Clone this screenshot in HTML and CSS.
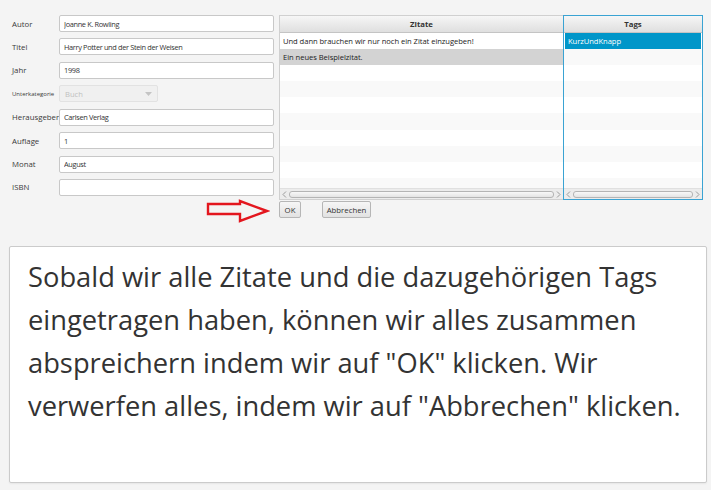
FILE: index.html
```html
<!DOCTYPE html>
<html lang="de">
<head>
<meta charset="utf-8">
<title>Zitate erfassen</title>
<link rel="stylesheet" href="styles.css">
</head>
<body>
<div class="window">
  <div class="top">
    <form class="form">
      <label class="lbl">Autor</label><input class="field" type="text" value="Joanne K. Rowling">
      <label class="lbl">Titel</label><input class="field" type="text" value="Harry Potter und der Stein der Weisen">
      <label class="lbl">Jahr</label><input class="field" type="text" value="1998">
      <label class="lbl small">Unterkategorie</label>
      <div class="select"><span>Buch</span><svg class="caret" width="7" height="4" viewBox="0 0 7 4"><path d="M0 0h7L3.5 4z" fill="#c4c4c4"/></svg></div>
      <label class="lbl">Herausgeber</label><input class="field" type="text" value="Carlsen Verlag">
      <label class="lbl">Auflage</label><input class="field" type="text" value="1">
      <label class="lbl">Monat</label><input class="field" type="text" value="August">
      <label class="lbl">ISBN</label><input class="field" type="text" value="">
    </form>
    <div class="right">
      <div class="tables">
        <div class="table quotes">
          <div class="th">Zitate</div>
          <div class="rows">
            <div class="row">Und dann brauchen wir nur noch ein Zitat einzugeben!</div>
            <div class="row grey">Ein neues Beispielzitat.</div>
            <div class="row"></div><div class="row"></div><div class="row"></div><div class="row"></div>
            <div class="row"></div><div class="row"></div><div class="row"></div><div class="row"></div>
          </div>
          <div class="hscroll">
            <svg class="arr" width="5" height="7" viewBox="0 0 5 7"><path d="M4 0.5L1 3.5L4 6.5" fill="none" stroke="#9a9a9a" stroke-width="1"/></svg>
            <div class="thumb"></div>
            <svg class="arr" width="5" height="7" viewBox="0 0 5 7"><path d="M1 0.5L4 3.5L1 6.5" fill="none" stroke="#9a9a9a" stroke-width="1"/></svg>
          </div>
        </div>
        <div class="table tags">
          <div class="th">Tags</div>
          <div class="rows">
            <div class="row blue">KurzUndKnapp</div>
            <div class="row"></div><div class="row"></div><div class="row"></div><div class="row"></div>
            <div class="row"></div><div class="row"></div><div class="row"></div><div class="row"></div><div class="row"></div>
          </div>
          <div class="hscroll">
            <svg class="arr" width="5" height="7" viewBox="0 0 5 7"><path d="M4 0.5L1 3.5L4 6.5" fill="none" stroke="#9a9a9a" stroke-width="1"/></svg>
            <div class="thumb"></div>
            <svg class="arr" width="5" height="7" viewBox="0 0 5 7"><path d="M1 0.5L4 3.5L1 6.5" fill="none" stroke="#9a9a9a" stroke-width="1"/></svg>
          </div>
        </div>
      </div>
      <div class="buttons">
        <button class="btn ok" type="button">OK</button>
        <button class="btn cancel" type="button">Abbrechen</button>
      </div>
    </div>
    <svg class="arrow" width="64" height="25" viewBox="0 0 64 25"><path d="M2 5H34V2L61 12L34 22V15H2Z" fill="none" stroke="#e3161e" stroke-width="2.4" stroke-linejoin="miter"/></svg>
  </div>
  <div class="card">
    <p class="note">Sobald wir alle Zitate und die dazugehörigen Tags eingetragen haben, können wir alles zusammen abspreichern indem wir auf "OK" klicken. Wir verwerfen alles, indem wir auf "Abbrechen" klicken.</p>
  </div>
</div>
</body>
</html>
```

FILE: styles.css
```css
* { box-sizing: border-box; }

html, body {
  margin: 0;
  padding: 0;
}

body {
  width: 711px;
  height: 490px;
  overflow: hidden;
  background: #f4f4f4;
  font-family: "Open Sans", "Liberation Sans", sans-serif;
  color: #333;
}

.window {
  display: flex;
  flex-direction: column;
}

.top {
  position: relative;
  display: flex;
  padding: 15px 8px 0 12px;
}

.form {
  display: grid;
  grid-template-columns: 47px 215px;
  grid-auto-rows: 17px;
  row-gap: 6.43px;
  align-content: start;
  margin: 0;
}

.lbl {
  font-size: 7.8px;
  color: #3a3a3a;
  align-self: center;
  white-space: nowrap;
}

.lbl.small {
  font-size: 6px;
}

.field {
  height: 17px;
  width: 215px;
  margin: 0;
  padding: 0 4px;
  border: 1px solid #c8c8c8;
  border-radius: 2px;
  background: #fff;
  font-family: inherit;
  font-size: 7.4px;
  letter-spacing: -0.35px;
  color: #333;
  outline: none;
}

.select {
  width: 99px;
  height: 17px;
  display: flex;
  align-items: center;
  justify-content: space-between;
  padding: 0 5px 0 5px;
  border: 1px solid #e2e2e2;
  border-radius: 2px;
  background: #f0f0f0;
  font-size: 7.6px;
  color: #c0c0c0;
}

.right {
  margin-left: 5px;
  width: 424px;
  display: flex;
  flex-direction: column;
}

.tables {
  display: flex;
  height: 185px;
}

.table {
  display: flex;
  flex-direction: column;
  background: #fff;
  border: 1px solid #d0d0d0;
}

.quotes {
  width: 284px;
  border-right: none;
}

.tags {
  width: 140px;
  border: 1px solid #3aa3d3;
}

.th {
  height: 17px;
  flex: none;
  display: flex;
  align-items: center;
  justify-content: center;
  background: linear-gradient(#f6f6f6, #dfdfdf);
  border-bottom: 1px solid #c4c4c4;
  font-size: 7.8px;
  font-weight: 700;
  color: #333;
}

.rows {
  flex: 1;
  overflow: hidden;
}

.row {
  height: 16.1px;
  line-height: 16px;
  padding-left: 3px;
  font-size: 7.6px;
  letter-spacing: -0.05px;
  color: #222;
  white-space: nowrap;
  background: #fff;
}

.row:nth-child(even) {
  background: #f9f9f9;
}

.row.grey {
  background: #d3d3d3;
}

.row.blue {
  background: #0096c9;
  color: #fff;
  margin: 0 1px;
}

.hscroll {
  height: 11px;
  flex: none;
  display: flex;
  align-items: center;
  gap: 2px;
  padding: 0 2px;
  background: #ececec;
  border-top: 1px solid #e0e0e0;
}

.arr {
  flex: none;
}

.thumb {
  flex: 1;
  height: 7px;
  border: 1px solid #b4b4b4;
  border-radius: 3px;
  background: linear-gradient(#f8f8f8, #e4e4e4);
}

.buttons {
  display: flex;
  gap: 21px;
  margin-top: 1px;
}

.btn {
  height: 17px;
  padding: 0;
  margin: 0;
  border: 1px solid #b6b6b6;
  border-radius: 2px;
  background: linear-gradient(#f6f6f6, #e2e2e2);
  font-family: inherit;
  font-size: 7.8px;
  color: #333;
}

.btn.ok {
  width: 22px;
}

.btn.cancel {
  width: 49px;
}

.arrow {
  position: absolute;
  left: 206px;
  top: 199px;
}

.card {
  margin: 28px 4px 0 9px;
  height: 237px;
  background: #fff;
  border: 1px solid #cbcbcb;
  border-radius: 2px;
  box-shadow: 0 1px 2px rgba(0, 0, 0, 0.06);
  padding: 8px 18px 0 18px;
}

.note {
  margin: 0;
  font-size: 27.3px;
  line-height: 43px;
  color: #333;
}
```
